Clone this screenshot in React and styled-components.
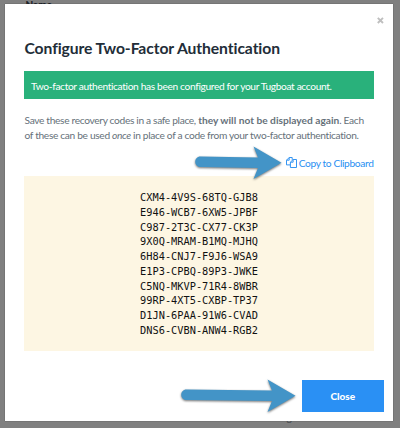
import React from "react";
import styled, { createGlobalStyle } from "styled-components";

const GlobalStyle = createGlobalStyle`
  * { box-sizing: border-box; }
  body {
    margin: 0;
    background: #808080;
    font-family: Lato, "Open Sans", sans-serif;
    font-variant-ligatures: none;
  }
`;

const Backdrop = styled.div`
  position: relative;
  width: 400px;
  height: 428px;
  padding: 4px 7px 7px 5px;
  overflow: hidden;
  background: #808080;
`;

const PageText = styled.div`
  position: absolute;
  left: ${(p) => p.$x}px;
  top: ${(p) => p.$y}px;
  font-size: 10px;
  line-height: 12px;
  font-weight: ${(p) => (p.$bold ? 900 : 400)};
  color: ${(p) => (p.$bold ? "#1c2228" : "#444a4f")};
  white-space: nowrap;
`;

const Modal = styled.section`
  position: relative;
  display: flex;
  flex-direction: column;
  height: 417px;
  padding: 8px 9.5px 9px 19px;
  background: #fff;
  box-shadow: 0 0 1px rgba(0, 0, 0, 0.5);
`;

const CloseIcon = styled.button`
  align-self: flex-end;
  display: flex;
  width: 7px;
  height: 18px;
  padding: 5px 0 6px;
  margin: 0;
  border: 0;
  background: none;
`;

const Title = styled.h1`
  margin: 8px 0 13px 0.5px;
  font-size: 15.7px;
  line-height: 20px;
  font-weight: 700;
  letter-spacing: -0.09px;
  color: #222d38;
  white-space: nowrap;
`;

const Alert = styled.div`
  width: 349.5px;
  height: 28px;
  padding-left: 7px;
  background: #29b17b;
  color: #fff;
  font-size: 10.2px;
  line-height: 30px;
  letter-spacing: -0.35px;
  white-space: nowrap;
`;

const Message = styled.p`
  margin: 14px 0 0 0.5px;
  font-size: 10.2px;
  line-height: 15px;
  letter-spacing: -0.33px;
  color: #66717a;
  white-space: nowrap;

  b {
    letter-spacing: 0;
  }
`;

const CopyLink = styled.a`
  display: flex;
  align-items: center;
  justify-content: flex-end;
  gap: 2px;
  width: 349.5px;
  height: 15px;
  margin: 12px 0 6px;
  font-size: 10.2px;
  letter-spacing: -0.35px;
  color: #2a8ff2;
  white-space: nowrap;
`;

const Codes = styled.pre`
  width: 350px;
  height: 175px;
  margin: 0;
  padding-top: 14px;
  background: #fdf6e3;
  color: #111;
  font-family: "DejaVu Sans Mono", monospace;
  font-size: 10.3px;
  line-height: 14.75px;
  text-align: center;
`;

const CloseButton = styled.button`
  align-self: flex-end;
  width: 81.5px;
  height: 32px;
  margin: auto 0 0;
  padding: 0;
  border: 0;
  background: #2a90f4;
  color: #fff;
  font: 900 10px Lato, sans-serif;
`;

const Annotation = styled.svg`
  position: absolute;
  left: ${(p) => p.$x}px;
  top: ${(p) => p.$y}px;
  overflow: visible;
  filter: drop-shadow(0.5px 1.5px 1px rgba(0, 0, 0, 0.55));
`;

const codes = [
  "CXM4-4V9S-68TQ-GJB8",
  "E946-WCB7-6XW5-JPBF",
  "C987-2T3C-CX77-CK3P",
  "9X0Q-MRAM-B1MQ-MJHQ",
  "6H84-CNJ7-F9J6-WSA9",
  "E1P3-CPBQ-89P3-JWKE",
  "C5NQ-MKVP-71R4-8WBR",
  "99RP-4XT5-CXBP-TP37",
  "D1JN-6PAA-91W6-CVAD",
  "DNS6-CVBN-ANW4-RGB2",
];

function Arrow({ x, y, length }) {
  const neck = length - 23.5;
  const barb = length - 28;
  return (
    <Annotation $x={x} $y={y} width={length} height="34" viewBox={`0 0 ${length} 34`}>
      <path
        d={`M5.5 10.5 L${neck} 11.5 L${barb} 0.5 L${length} 16.8 L${barb} 33 L${neck} 22 L5.5 21 C-1.5 21 -1.5 10.5 5.5 10.5 Z`}
        fill="#4394c7"
      />
    </Annotation>
  );
}

function CopyIcon() {
  return (
    <svg width="11" height="11" viewBox="0 0 11 11" fill="none" stroke="#2a8ff2" strokeWidth="0.95" strokeLinejoin="round">
      <path d="M4.4 7.9H.5V3.2L3.2.5h3v2.2M3.2.5v2.7H.5" />
      <path d="M7.1 2.5h3.4v8H4.4V5.2L7.1 2.5ZM7.1 2.5v2.7H4.4" />
    </svg>
  );
}

export default function App() {
  return (
    <Backdrop>
      <GlobalStyle />
      <PageText $x={25.5} $y={-2} $bold>Name</PageText>
      <PageText $x={286.5} $y={411}>g</PageText>
      <Modal>
        <CloseIcon aria-label="Close dialog">
          <svg width="7" height="7" viewBox="0 0 7 7" stroke="#bfbfbf" strokeWidth="1.9">
            <path d="M.8.8l5.2 5.2M6 .8L.8 6" />
          </svg>
        </CloseIcon>
        <Title>Configure Two-Factor Authentication</Title>
        <Alert>Two-factor authentication has been configured for your Tugboat account.</Alert>
        <Message>
          Save these recovery codes in a safe place, <b>they will not be displayed again</b>. Each
          <br />
          of these can be used <em>once</em> in place of a code from your two-factor authentication.
        </Message>
        <CopyLink>
          <CopyIcon />
          <span>Copy to Clipboard</span>
        </CopyLink>
        <Codes>{codes.join("\n")}</Codes>
        <CloseButton>Close</CloseButton>
      </Modal>
      <Arrow x={195} y={146} length={86.5} />
      <Arrow x={181} y={379} length={114.5} />
    </Backdrop>
  );
}
